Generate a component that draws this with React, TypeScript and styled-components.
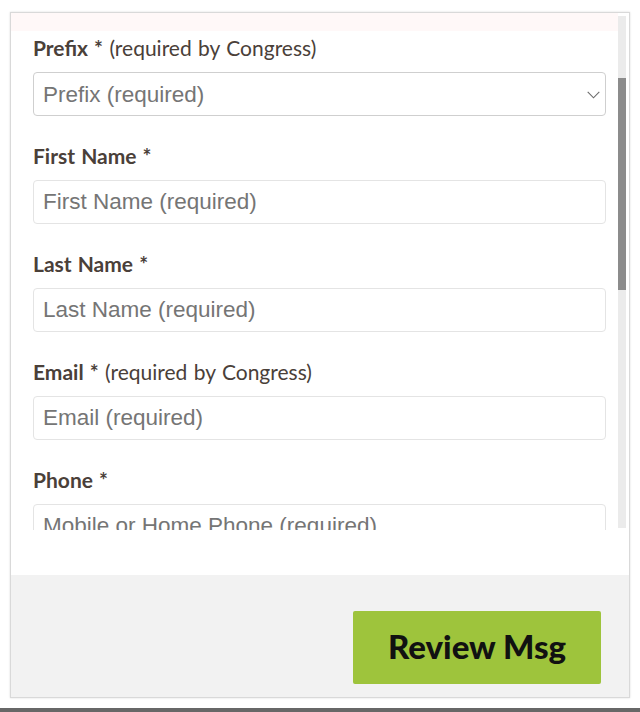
import React, { useLayoutEffect, useRef } from "react";
import styled, { createGlobalStyle } from "styled-components";

const Global = createGlobalStyle`
  html, body { margin: 0; padding: 0; background: #ffffff; }
  body { height: 712px; overflow: hidden; font-family: Lato, "Open Sans", sans-serif; }
  * { box-sizing: border-box; }
`;

const Page = styled.div`
  display: flex;
  flex-direction: column;
  height: 712px;
  padding: 12px 10px 0 10px;
`;

const Frame = styled.div`
  display: flex;
  flex-direction: column;
  width: 620px;
  height: 688px;
  border: 1px solid #d9d9d9;
  box-shadow: 0 0 2px rgba(0, 0, 0, 0.14);
  background: #ffffff;
`;

const ScrollRow = styled.div`
  display: flex;
  height: 517px;
`;

const Viewport = styled.div`
  flex: 1;
  overflow: hidden;
`;

const Track = styled.div`
  width: 8px;
  margin: 3px 3px 2px 0;
  background: #ebebeb;
  display: flex;
  flex-direction: column;
`;

const Thumb = styled.div`
  height: 212px;
  margin-top: 62px;
  background: #8c8c8c;
`;

const Content = styled.div`
  display: flex;
  flex-direction: column;
  padding: 0 12px 600px 22px;
`;

const Notice = styled.div`
  height: 169px;
  margin: 0 -12px 5px -22px;
  background: #fff8f8;
`;

const Field = styled.div`
  display: flex;
  flex-direction: column;
  gap: 12px;
  margin-bottom: 28px;
`;

const Label = styled.label`
  font-family: Lato, sans-serif;
  font-size: 21px;
  line-height: 24px;
  height: 24px;
  color: #4a4039;
  white-space: nowrap;
  word-spacing: 1px;
`;

const Strong = styled.span`
  font-weight: 700;
`;

const Input = styled.input`
  width: 573px;
  height: 44px;
  border: 1px solid #e4e4e4;
  border-radius: 4px;
  padding: 0 9px;
  font-family: "Liberation Sans", Arial, sans-serif;
  font-size: 22.5px;
  color: #333;
  background: #fff;
  outline: none;
  &::placeholder { color: #757575; }
`;

const SelectWrap = styled.div`
  position: relative;
  width: 573px;
  height: 44px;
`;

const Select = styled.select`
  appearance: none;
  width: 100%;
  height: 44px;
  border: 1px solid #cfcfcf;
  border-radius: 4px;
  padding: 0 9px;
  font-family: "Liberation Sans", Arial, sans-serif;
  font-size: 22.5px;
  color: #757575;
  background: #fff;
  outline: none;
`;

const Chevron = styled.svg`
  position: absolute;
  right: 6px;
  top: 19px;
  pointer-events: none;
`;

const Spacer = styled.div`
  height: 45px;
`;

const Footer = styled.div`
  flex: 1;
  background: #f2f2f2;
  display: flex;
  justify-content: flex-end;
  align-items: flex-start;
  padding: 36px 28px 0 0;
`;

const Button = styled.button`
  width: 248px;
  height: 73px;
  border: none;
  border-radius: 2px;
  background: #9ec43c;
  color: #111;
  font-family: Lato, sans-serif;
  font-weight: 900;
  font-size: 33px;
  padding: 0 0 4px 0;
  cursor: pointer;
`;

const BottomBar = styled.div`
  margin-top: 10px;
  height: 4px;
  margin-left: -10px;
  margin-right: -10px;
  background: #676767;
`;

type F = { name: string; extra?: string; placeholder: string };

const fields: F[] = [
  { name: "First Name", placeholder: "First Name (required)" },
  { name: "Last Name", placeholder: "Last Name (required)" },
  { name: "Email", extra: "(required by Congress)", placeholder: "Email (required)" },
  { name: "Phone", placeholder: "Mobile or Home Phone (required)" },
];

export default function App() {
  const ref = useRef<HTMLDivElement>(null);
  useLayoutEffect(() => {
    if (ref.current) ref.current.scrollTop = 151;
  }, []);
  return (
    <>
      <Global />
      <Page>
        <Frame>
          <ScrollRow>
            <Viewport ref={ref}>
              <Content>
                <Notice />
                <Field>
                  <Label>
                    <Strong>Prefix *</Strong> (required by Congress)
                  </Label>
                  <SelectWrap>
                    <Select defaultValue="">
                      <option value="" disabled>
                        Prefix (required)
                      </option>
                    </Select>
                    <Chevron width="13" height="8" viewBox="0 0 13 8">
                      <path d="M0.7 0.8 L6.5 6.8 L12.3 0.8" fill="none" stroke="#6b6b6b" strokeWidth="1.1" />
                    </Chevron>
                  </SelectWrap>
                </Field>
                {fields.map((f) => (
                  <Field key={f.name}>
                    <Label>
                      <Strong>{f.name} *</Strong>
                      {f.extra ? ` ${f.extra}` : ""}
                    </Label>
                    <Input placeholder={f.placeholder} />
                  </Field>
                ))}
              </Content>
            </Viewport>
            <Track>
              <Thumb />
            </Track>
          </ScrollRow>
          <Spacer />
          <Footer>
            <Button>Review Msg</Button>
          </Footer>
        </Frame>
        <BottomBar />
      </Page>
    </>
  );
}
